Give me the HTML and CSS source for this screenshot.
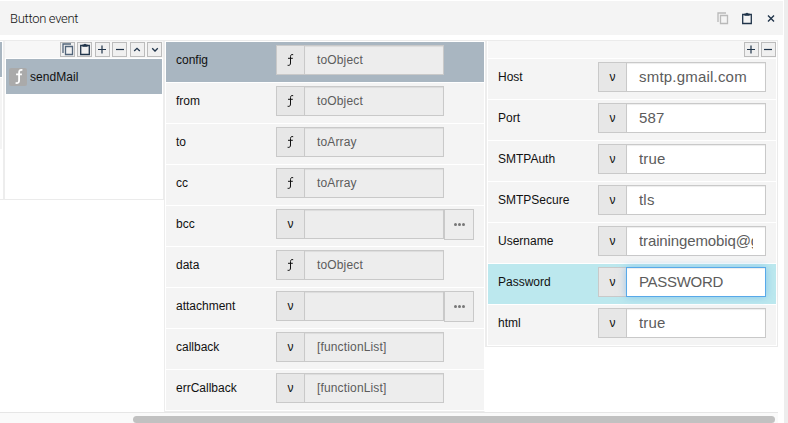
FILE: index.html
```html
<!DOCTYPE html>
<html lang="en">
<head>
<meta charset="utf-8">
<title>Button event</title>
<link rel="stylesheet" href="styles.css">
</head>
<body>
<svg class="defs" width="0" height="0">
  <symbol id="copy" viewBox="0 0 12 13"><path d="M1 10V1h8M3.5 3.5h7v8h-7z" fill="none" stroke="currentColor" stroke-width="1.3"/></symbol>
  <symbol id="paste" viewBox="0 0 12 13"><path d="M1.7 2.5h8.6v9H1.7z" fill="none" stroke="currentColor" stroke-width="1.3"/><path d="M3.5 1.5h1.4a1.2 1.2 0 0 1 2.2 0h1.4v2.3h-5z" fill="currentColor"/></symbol>
  <symbol id="plus" viewBox="0 0 12 13"><path d="M2 6.5h8M6 2.5v8" fill="none" stroke="currentColor" stroke-width="1.2"/></symbol>
  <symbol id="minus" viewBox="0 0 12 13"><path d="M2 6.5h8" fill="none" stroke="currentColor" stroke-width="1.2"/></symbol>
  <symbol id="up" viewBox="0 0 12 13"><path d="M3.2 8L6 5.3 8.8 8" fill="none" stroke="currentColor" stroke-width="1.3"/></symbol>
  <symbol id="down" viewBox="0 0 12 13"><path d="M3.2 5.3L6 8l2.8-2.7" fill="none" stroke="currentColor" stroke-width="1.3"/></symbol>
  <symbol id="close" viewBox="0 0 12 13"><path d="M3 3.5l6 6M9 3.5l-6 6" fill="none" stroke="currentColor" stroke-width="1.4"/></symbol>
  <symbol id="fn" viewBox="0 0 10 14"><path d="M8.2 1.7C6.4 1.2 5.5 1.9 5.5 3.6V10c0 2-.9 2.7-2.9 2.3M3 5.3h4.8" fill="none" stroke="currentColor"/></symbol>
</svg>
<div class="window">
  <header class="titlebar">
    <h1>Button event</h1>
    <svg class="icon faded"><use href="#copy"/></svg>
    <svg class="icon"><use href="#paste"/></svg>
    <svg class="icon"><use href="#close"/></svg>
  </header>
  <main class="panels">
    <section class="edge"><div class="edge-selected"></div><div class="edge-row"></div></section>
    <section class="actions">
      <div class="toolbar">
        <button><svg class="icon slate"><use href="#copy"/></svg></button>
        <button><svg class="icon"><use href="#paste"/></svg></button>
        <button><svg class="icon"><use href="#plus"/></svg></button>
        <button><svg class="icon"><use href="#minus"/></svg></button>
        <button><svg class="icon"><use href="#up"/></svg></button>
        <button><svg class="icon"><use href="#down"/></svg></button>
      </div>
      <div class="action"><span class="badge"><svg><use href="#fn"/></svg></span>sendMail</div>
    </section>
    <section class="params">
      <div class="row selected"><label>config</label><span class="addon"><svg><use href="#fn"/></svg></span><span class="field">toObject</span></div>
      <div class="row"><label>from</label><span class="addon"><svg><use href="#fn"/></svg></span><span class="field">toObject</span></div>
      <div class="row"><label>to</label><span class="addon"><svg><use href="#fn"/></svg></span><span class="field">toArray</span></div>
      <div class="row"><label>cc</label><span class="addon"><svg><use href="#fn"/></svg></span><span class="field">toArray</span></div>
      <div class="row"><label>bcc</label><span class="addon">ν</span><span class="field"></span><span class="more"><i></i><i></i><i></i></span></div>
      <div class="row"><label>data</label><span class="addon"><svg><use href="#fn"/></svg></span><span class="field">toObject</span></div>
      <div class="row"><label>attachment</label><span class="addon">ν</span><span class="field"></span><span class="more"><i></i><i></i><i></i></span></div>
      <div class="row"><label>callback</label><span class="addon">ν</span><span class="field">[functionList]</span></div>
      <div class="row"><label>errCallback</label><span class="addon">ν</span><span class="field">[functionList]</span></div>
    </section>
    <section class="values">
      <div class="toolbar">
        <button><svg class="icon"><use href="#plus"/></svg></button>
        <button><svg class="icon"><use href="#minus"/></svg></button>
      </div>
      <div class="row"><label>Host</label><span class="addon">ν</span><span class="field">smtp.gmail.com</span></div>
      <div class="row"><label>Port</label><span class="addon">ν</span><span class="field">587</span></div>
      <div class="row"><label>SMTPAuth</label><span class="addon">ν</span><span class="field">true</span></div>
      <div class="row"><label>SMTPSecure</label><span class="addon">ν</span><span class="field">tls</span></div>
      <div class="row"><label>Username</label><span class="addon">ν</span><span class="field"><span class="clip">trainingemobiq@g</span></span></div>
      <div class="row active"><label>Password</label><span class="addon">ν</span><span class="field focus caps">PASSWORD</span></div>
      <div class="row"><label>html</label><span class="addon">ν</span><span class="field">true</span></div>
    </section>
  </main>
  <div class="scrollbar"><div class="thumb"></div></div>
</div>
</body>
</html>
```
FILE: styles.css
```css
* { box-sizing: border-box; }
body {
  margin: 0;
  width: 788px;
  height: 423px;
  overflow: hidden;
  background: #fff;
  font: 12px "Liberation Sans", Arial, sans-serif;
  color: #111;
}
.defs { display: block; }
.window {
  height: 423px;
  padding-top: 1px;
  border-right: 4px solid #ededed;
  display: flex;
  flex-direction: column;
}
.titlebar {
  height: 34px;
  flex: none;
  margin-right: 1px;
  padding: 0 6px 0 10px;
  display: flex;
  align-items: center;
  gap: 12px;
  background: #f4f4f4;
}
.titlebar h1 {
  flex: 1;
  margin: 0;
  font: 300 13px Roboto, sans-serif;
  letter-spacing: -.3px;
  color: #111;
}
.icon { display: block; width: 12px; height: 13px; color: #20344a; }
.icon.faded { color: #b9b9b9; }
.icon.slate { color: #52657a; }

.panels {
  flex: none;
  height: 372px;
  width: 778px;
  margin-top: 5px;
  display: flex;
  align-items: flex-start;
  border-top: 1px solid #ebebeb;
}
.edge {
  width: 5px;
  height: 159px;
  padding-top: 1px;
  border-right: 2px solid #ededed;
  border-bottom: 1px solid #ebebeb;
}
.edge-selected { width: 2px; height: 35px; background: #a9b6c1; }
.edge-row { width: 2px; height: 71px; margin-top: 1px; background: #f4f4f4; }
.actions {
  width: 160px;
  height: 159px;
  border-right: 2px solid #ededed;
  border-bottom: 1px solid #ebebeb;
}
.toolbar {
  height: 17px;
  display: flex;
  justify-content: flex-end;
  gap: 2.4px;
  padding: 1px 1px 0 0;
  background: #f7f7f7;
}
.toolbar button {
  width: 15px;
  height: 15px;
  padding: 0;
  border: 1px solid #bcbcbc;
  background: #f0f0f0;
  display: flex;
  align-items: center;
  justify-content: center;
}
.action {
  margin: 1px 1px 0;
  height: 35px;
  display: flex;
  align-items: center;
  gap: 3px;
  padding-left: 3px;
  background: #a9b6c1;
  letter-spacing: .05px;
}
.badge {
  width: 18px;
  height: 18px;
  border-radius: 2px;
  background: #aaa;
  color: #fff;
  display: flex;
  align-items: center;
  justify-content: center;
}
.badge svg { width: 13px; height: 17px; stroke-width: 1.5; }

.params {
  width: 320px;
  height: 371px;
  padding: 1px 0 0 1px;
  border-right: 1px solid #fff;
  border-bottom: 1px solid #ebebeb;
  box-shadow: -1px 0 #ededed;
}
.values {
  width: 293px;
  height: 306px;
  padding: 0 1px;
  border-left: 2px solid #ededed;
  border-right: 1px solid #ebebeb;
  border-bottom: 1px solid #ebebeb;
}
.values .toolbar { margin-bottom: 1px; gap: 2px; padding-right: .5px; }
.row {
  height: 40px;
  margin-bottom: 1px;
  display: flex;
  align-items: flex-start;
  padding: 3px 0 0 10px;
  background: #f4f4f4;
}
.params .row { width: 318px; }
.row.selected { background: #a9b6c1; }
.row.active { background: #bce8ee; }
.row label { width: 100px; line-height: 30px; flex: none; }
.addon {
  width: 28px;
  height: 30px;
  flex: none;
  border: 1px solid #c9c9c9;
  border-right: 0;
  background: #e7e7e7;
  display: flex;
  align-items: center;
  justify-content: center;
}
.addon svg { width: 10px; height: 14px; margin-right: 1px; stroke-width: 1; }
.field {
  width: 140px;
  height: 30px;
  flex: none;
  padding: 0 12px;
  border: 1px solid #c9c9c9;
  background: #ededed;
  box-shadow: inset 0 1px 1px rgba(0, 0, 0, .075);
  line-height: 28px;
  color: #5c5c5c;
  white-space: nowrap;
  letter-spacing: .15px;
}
.values .field { background: #fff; font-size: 15px; letter-spacing: .2px; }
.values .field.caps { letter-spacing: -.3px; }
.values .field.focus {
  border-color: #58a9e9;
  box-shadow: inset 0 1px 1px rgba(0, 0, 0, .075), 0 0 8px rgba(102, 175, 233, .6);
}
.clip { display: block; overflow: hidden; letter-spacing: -.12px; }
.more {
  width: 30px;
  height: 31px;
  border: 1px solid #c9c9c9;
  background: #ededed;
  display: flex;
  align-items: center;
  justify-content: center;
  gap: 1px;
}
.more i { width: 3px; height: 3px; border-radius: 1.5px; background: #777; }
.scrollbar {
  flex: none;
  height: 11px;
  width: 778px;
  padding: 3px 3px 0 133px;
  border-top: 1px solid #e6e6e6;
  background: #fafafa;
}
.thumb { height: 7px; border-radius: 4px; background: #c1c1c1; }
```
